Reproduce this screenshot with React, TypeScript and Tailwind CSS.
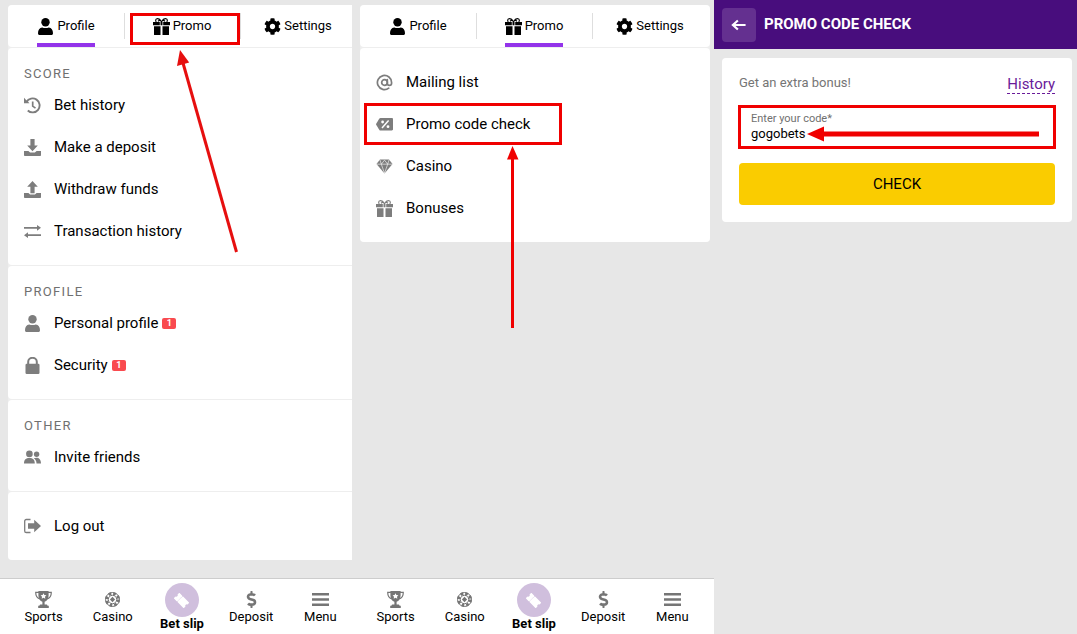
import type { ReactNode } from "react";
import { AtSign } from "lucide-react";
import { FaCog, FaDollarSign } from "react-icons/fa";

type IconProps = { className?: string };
type SvgProps = IconProps & { children: ReactNode; box?: string };

function Svg({ className, children, box = "0 0 17 17" }: SvgProps) {
  return (
    <svg viewBox={box} className={className} fill="currentColor" aria-hidden="true">
      {children}
    </svg>
  );
}

const UserIcon = ({ className }: IconProps) => (
  <Svg className={className}>
    <circle cx="8.500" cy="4.200" r="4.200" />
    <path d="M1 15.200C1 11.600 2.600 9.800 5.200 9.400c2.100.9 4.500.9 6.600 0C14.400 9.800 16 11.600 16 15.200c0 1.100-.6 1.800-1.700 1.800H2.700C1.600 17 1 16.300 1 15.200z" />
  </Svg>
);

const GiftIcon = ({ className }: IconProps) => (
  <Svg className={className}>
    <path d="M8.500 3.800C7.500 2 5.500.4 4 .7 2.500 1 2.300 2.800 3.300 3.800M8.500 3.800c1-1.800 3-3.400 4.500-3.100 1.500.3 1.700 2.100.7 3.100M5 3.300c1.200-1.300 2.300-1.300 3.500.3 1.200-1.600 2.300-1.600 3.500-.3" fill="none" stroke="currentColor" strokeWidth="1.100" />
    <path d="M0 4h6.800v3.200H0zM7.500 4h2v3.200h-2zM10.200 4H17v3.200h-6.800zM1 8.200h6.500V17H1.600a.6.6 0 0 1-.6-.6zM9.500 8.200H16v8.200a.6.6 0 0 1-.6.6H9.500z" />
  </Svg>
);

const HistoryIcon = ({ className }: IconProps) => (
  <Svg className={className}>
    <path d="M2.500 5A7 7 0 1 1 3.800 13.500" fill="none" stroke="currentColor" strokeWidth="1.900" />
    <path d="M0 .8 1.600 2.500 4.800 5.500 5.500 6.300H0z" />
    <path d="M8.700 4.500v4.600l2.800 2" fill="none" stroke="currentColor" strokeWidth="1.700" />
  </Svg>
);

const Tray = () => (
  <path d="M0 12h4.400l1.700 1.600h4.800L12.600 12H17v4.200a.8.8 0 0 1-.8.8H.8a.8.8 0 0 1-.8-.8z" />
);

const DepositIcon = ({ className }: IconProps) => (
  <Svg className={className}>
    <path d="M6.400 0h4.200v6.500h3.200L8.500 12.300 3.200 6.500h3.200z" />
    <Tray />
  </Svg>
);

const WithdrawIcon = ({ className }: IconProps) => (
  <Svg className={className}>
    <path d="M8.500 0l5.300 5.800h-3.200v6.500H6.400V5.800H3.200z" />
    <Tray />
  </Svg>
);

const SwapIcon = ({ className }: IconProps) => (
  <Svg className={className}>
    <path d="M0 3.900h13V1.900L17 4.800l-4 2.900V5.700H0zM17 11.300H4V9.300L0 12.200l4 2.900v-2H17z" />
  </Svg>
);

const LockIcon = ({ className }: IconProps) => (
  <Svg className={className}>
    <path d="M4.200 8V4.800a4.300 4 0 0 1 8.600 0V8" fill="none" stroke="currentColor" strokeWidth="2" />
    <rect x="1.500" y="6.800" width="14" height="10.200" rx="1.200" />
  </Svg>
);

const FriendsIcon = ({ className }: IconProps) => (
  <Svg className={className}>
    <circle cx="5.400" cy="4.900" r="3.300" />
    <circle cx="12.600" cy="5.200" r="2.700" />
    <path d="M0 14.500c0-4 2-5.600 5.400-5.600s5.400 1.600 5.400 5.600zM9.700 9.300c3.800-1.600 7.300 0 7.300 5.200h-4.500c0-2.400-.9-4-2.800-5.200z" />
  </Svg>
);

const LogoutIcon = ({ className }: IconProps) => (
  <Svg className={className}>
    <path d="M6.500 1.500H2.300A1.600 1.600 0 0 0 .7 3.100v9.800a1.600 1.600 0 0 0 1.600 1.600h4.200" fill="none" stroke="currentColor" strokeWidth="1.300" />
    <path d="M4 5.200h6.200V1.700L17 8l-6.800 6.300v-3.500H4z" />
  </Svg>
);

const CouponIcon = ({ className }: IconProps) => (
  <Svg className={className}>
    <path d="M4.500 2h11.300c.7 0 1.200.5 1.200 1.200v10.100c0 .7-.5 1.200-1.200 1.200H4.500c-.5 0-.8-.2-1.100-.6L.3 9.100a1.500 1.500 0 0 1 0-1.600L3.400 2.600C3.700 2.200 4 2 4.500 2z" />
    <path d="M6 12 12.600 4.600" stroke="white" strokeWidth="1.500" />
    <circle cx="6.600" cy="6" r="1.400" fill="white" />
    <circle cx="12" cy="10.700" r="1.400" fill="white" />
  </Svg>
);

const DiamondIcon = ({ className }: IconProps) => (
  <Svg className={className}>
    <path d="M4 1.500h9L16.500 6l-8 9.500L.5 6z" />
    <path d="M.8 6.200h15.400M4 2l1.300 4.200 3.200 9 3.200-9L13 2M5.300 6.200 8.500 2.200l3.200 4" fill="none" stroke="white" strokeWidth=".6" />
  </Svg>
);

const TrophyIcon = ({ className }: IconProps) => (
  <Svg className={className}>
    <path d="M3.400 0h10.200v4.500c0 3.300-1.700 5.600-4 6.300v2.700h1.600c.7 0 1.200.5 1.400 1.200h1.200V17H3.200v-2.300h1.200c.2-.7.700-1.200 1.400-1.200h1.600v-2.700c-2.300-.7-4-3-4-6.300z" />
    <path d="M4 1.300H.7c0 3.800 1.400 6.200 4.600 6.700M13 1.300h3.300c0 3.800-1.400 6.200-4.600 6.700" fill="none" stroke="currentColor" strokeWidth="1.200" />
    <path d="m8.500 2.200.9 1.800 2 .3L10 5.700l.3 2-1.800-.9-1.800.9.300-2-1.400-1.400 2-.3z" fill="white" />
  </Svg>
);

const ChipIcon = ({ className }: IconProps) => (
  <Svg className={className}>
    <circle cx="8.500" cy="8.500" r="7" fill="none" stroke="currentColor" strokeWidth="1" />
    <circle cx="8.500" cy="8.500" r="6" fill="none" stroke="currentColor" strokeWidth="2.800" strokeDasharray="2.700 2.012" />
    <circle cx="8.500" cy="8.500" r="4.200" fill="none" stroke="currentColor" strokeWidth="1" />
    <path d="M8.500 5.700 11.100 8.500 8.500 11.300 5.900 8.500z" />
  </Svg>
);

const TicketIcon = ({ className }: IconProps) => (
  <Svg className={className}>
    <g transform="rotate(45 8.500 8.500)">
      <path d="M.5 4h4.700l.7 1 .7-1h9.900v2.800a1.800 1.800 0 0 0 0 3.400V13H6.600l-.7-1-.7 1H.5v-2.800a1.800 1.800 0 0 0 0-3.400z" />
      <path d="M5.900 6v1.200M5.900 7.900v1.200M5.900 9.800V11" stroke="#d0bfdd" strokeWidth=".8" />
    </g>
  </Svg>
);

const MenuIcon = ({ className }: IconProps) => (
  <Svg className={className}>
    <path d="M0 2h17v2.400H0zM0 7.300h17v2.400H0zM0 12.600h17V15H0z" />
  </Svg>
);

const BackIcon = ({ className }: IconProps) => (
  <Svg className={className}>
    <path d="M15.500 8.500H2M7.300 3.700 2 8.500l5.300 4.800" fill="none" stroke="currentColor" strokeWidth="2.300" />
  </Svg>
);

type Tab = "Profile" | "Promo" | "Settings";

const tabs: { label: Tab; icon: ReactNode }[] = [
  { label: "Profile", icon: <UserIcon className="size-[17px]" /> },
  { label: "Promo", icon: <GiftIcon className="size-[17px]" /> },
  { label: "Settings", icon: <FaCog className="size-[17px]" /> },
];

function Tabs({ active, marked }: { active: Tab; marked?: Tab }) {
  return (
    <div role="tablist" className="grid h-[42px] grid-cols-3 rounded bg-white pr-0.5">
      {tabs.map(({ label, icon }, i) => (
        <div key={label} className="relative flex items-stretch justify-center">
          {i > 0 && <span className="absolute top-2 left-0 h-[26px] w-px bg-[#dedede]" />}
          <button
            role="tab"
            aria-selected={label === active}
            className={
              label === active
                ? "flex items-center gap-[3px] border-y-4 border-t-transparent border-b-[#9333ea] text-[13px]"
                : "flex items-center gap-[3px] border-y-4 border-transparent text-[13px]"
            }
          >
            {icon}
            {label}
          </button>
          {label === marked && (
            <span className="absolute inset-x-0 top-2 ml-1.5 h-8 border-3 border-[#f00000]" />
          )}
        </div>
      ))}
    </div>
  );
}

type Item = { label: string; icon: ReactNode; badge?: number; marked?: boolean };

function Menu({ title, items }: { title?: string; items: Item[] }) {
  return (
    <section className="rounded bg-white pb-[13px]">
      {title ? (
        <h2 className="px-4 pt-[17px] pb-px text-[13px] leading-[18px] tracking-widest text-[#707070] uppercase">
          {title}
        </h2>
      ) : (
        <div className="h-[13px]" />
      )}
      <ul>
        {items.map(({ label, icon, badge, marked }) => (
          <li key={label} className="relative">
            <a href="#" className="flex h-[42px] items-center px-4 text-[15px]">
              <span className="mr-[13px] text-[#7d7d7d]">{icon}</span>
              {label}
              {badge && (
                <span className="ml-1 flex h-[11px] w-3.5 items-center justify-center rounded-xs bg-[#f94a4f] text-[9px] leading-none font-bold text-white">
                  {badge}
                </span>
              )}
            </a>
            {marked && (
              <span className="absolute inset-y-0 left-1 w-[198px] border-3 border-[#f00000]" />
            )}
          </li>
        ))}
      </ul>
    </section>
  );
}

const navItems = [
  { label: "Sports", icon: <TrophyIcon className="size-[17px]" /> },
  { label: "Casino", icon: <ChipIcon className="size-[17px]" /> },
  { label: "Bet slip", icon: <TicketIcon className="size-[15px]" /> },
  { label: "Deposit", icon: <FaDollarSign className="size-[17px]" /> },
  { label: "Menu", icon: <MenuIcon className="size-[17px]" /> },
];

function BottomNav({ className }: { className: string }) {
  return (
    <nav className="mt-auto h-14 border-t border-[#cdcdcd] bg-white">
      <div className={className}>
        {navItems.map(({ label, icon }) =>
          label === "Bet slip" ? (
            <a key={label} href="#" className="flex flex-col items-center pt-1 text-[13px] leading-[14px] font-bold">
              <span className="flex size-[34px] items-center justify-center rounded-full bg-[#d0bfdd] text-white">
                {icon}
              </span>
              {label}
            </a>
          ) : (
            <a key={label} href="#" className="flex flex-col items-center pt-3 text-[13px] leading-[18px]">
              <span className="text-[#757575]">{icon}</span>
              {label}
            </a>
          ),
        )}
      </div>
    </nav>
  );
}

const icon = "size-[17px]";

function ProfileScreen() {
  return (
    <section className="relative flex flex-col overflow-hidden">
      <div className="-mr-1.5 ml-2 flex flex-col gap-px rounded bg-[#eeeeee]">
        <Tabs active="Profile" marked="Promo" />
        <Menu
          title="Score"
          items={[
            { label: "Bet history", icon: <HistoryIcon className={icon} /> },
            { label: "Make a deposit", icon: <DepositIcon className={icon} /> },
            { label: "Withdraw funds", icon: <WithdrawIcon className={icon} /> },
            { label: "Transaction history", icon: <SwapIcon className={icon} /> },
          ]}
        />
        <Menu
          title="Profile"
          items={[
            { label: "Personal profile", icon: <UserIcon className={icon} />, badge: 1 },
            { label: "Security", icon: <LockIcon className={icon} />, badge: 1 },
          ]}
        />
        <Menu title="Other" items={[{ label: "Invite friends", icon: <FriendsIcon className={icon} /> }]} />
        <Menu items={[{ label: "Log out", icon: <LogoutIcon className={icon} /> }]} />
      </div>
      <svg viewBox="0 0 66 204" className="absolute top-11 left-[174px] h-[204px] w-[66px]" aria-hidden="true">
        <path d="M9 14 62.500 203" stroke="#e60f0f" strokeWidth="3" />
        <path d="M6 1 15.200 13.500 3 17z" fill="#e60f0f" />
      </svg>
      <BottomNav className="-mr-[3px] ml-[9px] grid grid-cols-5" />
    </section>
  );
}

function PromoScreen() {
  return (
    <section className="relative flex flex-col">
      <div className="mr-1 ml-2 flex flex-col gap-px rounded bg-[#eeeeee]">
        <Tabs active="Promo" />
        <Menu
          items={[
            { label: "Mailing list", icon: <AtSign className={icon} strokeWidth={2.4} /> },
            { label: "Promo code check", icon: <CouponIcon className={icon} />, marked: true },
            { label: "Casino", icon: <DiamondIcon className={icon} /> },
            { label: "Bonuses", icon: <GiftIcon className={icon} /> },
          ]}
        />
      </div>
      <svg viewBox="0 0 12 182" className="absolute top-[141px] left-[155px] h-[182px] w-3" aria-hidden="true">
        <path d="M5.500 12v170" stroke="#f00000" strokeWidth="3" />
        <path d="M5.500 0 11.500 13.500H0z" fill="#f00000" />
      </svg>
      <BottomNav className="mr-[7px] ml-[9px] grid grid-cols-5" />
    </section>
  );
}

function CodeCheckScreen() {
  return (
    <section>
      <header className="flex h-[49px] items-center gap-2 bg-[#480d7d] px-2 text-white">
        <button aria-label="Back" className="flex size-[34px] items-center justify-center rounded-sm bg-[#643090]">
          <BackIcon className="size-4" />
        </button>
        <h1 className="text-[15px] font-bold">PROMO CODE CHECK</h1>
      </header>
      <form className="mt-[9px] mr-[5px] ml-2 rounded bg-white px-[17px] pt-4 pb-[17px]" onSubmit={(e) => e.preventDefault()}>
        <div className="flex h-[31px] items-start justify-between">
          <p className="text-[13px] leading-[18px] text-[#757575]">Get an extra bonus!</p>
          <a href="#" className="border-b border-dashed border-[#6a1b9a] pt-px text-[15px] leading-[18px] text-[#6a1b9a]">
            History
          </a>
        </div>
        <div className="relative -mx-px flex h-[44px] flex-col border-3 border-[#f00000] px-2.5 pt-1">
          <label htmlFor="code" className="text-[11px] leading-[14px] text-[#707070]">
            Enter your code*
          </label>
          <input id="code" defaultValue="gogobets" className="h-4 w-full text-[13px] leading-4 outline-none" />
          <svg viewBox="0 0 232 16" className="absolute top-[18px] left-[66px] h-4 w-[232px]" aria-hidden="true">
            <path d="M15 8h217" stroke="#f00000" strokeWidth="5" />
            <path d="M0 8 17 .5v15z" fill="#f00000" />
          </svg>
        </div>
        <button className="mt-3.5 h-[42px] w-full rounded bg-[#facc00] text-[15px]">CHECK</button>
      </form>
    </section>
  );
}

export default function App() {
  return (
    <main className="grid min-h-screen grid-cols-[352fr_362fr_363fr] bg-[#e7e7e7] font-[Roboto,sans-serif] text-black">
      <div className="grid pt-[5px]">
        <ProfileScreen />
      </div>
      <div className="grid pt-[5px]">
        <PromoScreen />
      </div>
      <CodeCheckScreen />
    </main>
  );
}
